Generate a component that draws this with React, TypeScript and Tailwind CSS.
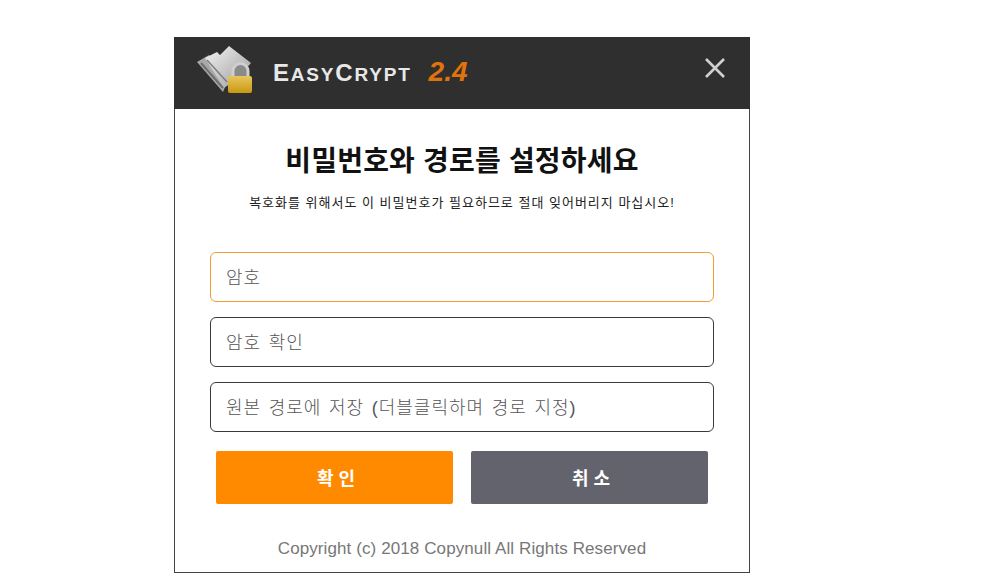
import { JSX } from "react";

const fields = [
    { label: "암호", border: "border-[#f39c2f]" },
    { label: "암호 확인", border: "border-[#3a3a3a]" },
    { label: "원본 경로에 저장 (더블클릭하며 경로 지정)", border: "border-[#3a3a3a]" },
];

function Logo(): JSX.Element {
    return (
        <svg width="58" height="50" viewBox="0 0 58 50" className="mb-[8px]">
            <defs>
                <linearGradient id="fold" x1="0" y1="0" x2="1" y2="1">
                    <stop offset="0" stopColor="#f4f4f4" />
                    <stop offset="1" stopColor="#9a9a9a" />
                </linearGradient>
                <linearGradient id="lock" x1="0" y1="0" x2="0" y2="1">
                    <stop offset="0" stopColor="#e8c65c" />
                    <stop offset="1" stopColor="#c9980f" />
                </linearGradient>
            </defs>
            <path d="M1 18 L13 11 L33 33 L27 48 Z" fill="#a8a8a8" />
            <path d="M9 14 L21 8 L24 11 L33 2 L55 19 L42 34 L28 44 Z" fill="url(#fold)" />
            <path d="M5 19 L27 44" stroke="#6f6f6f" strokeWidth="2" />
            <path d="M11 16 L31 38" stroke="#7d7d7d" strokeWidth="1.5" />
            <path d="M37 33 V27 a7.5 7.5 0 0 1 15 0 V33" fill="#8a8a8a" stroke="#cfcfcf" strokeWidth="3" />
            <rect x="32" y="32" width="24" height="17" rx="2" fill="url(#lock)" />
        </svg>
    );
}

export default function App(): JSX.Element {
    return (
        <div className="w-[989px] h-[581px] bg-white pt-[37px] pl-[174px] overflow-hidden font-['Liberation_Sans','Noto_Sans_CJK_KR',sans-serif]">
            <div className="w-[576px] h-[536px] border-x border-b border-[#444] flex flex-col">
                <header className="h-[72px] -mx-px bg-[#2f2f2f] flex items-center pl-[22px] pr-[24px]">
                    <Logo />
                    <div className="ml-[19px] mb-[2px] flex items-baseline text-[#e8e8e8] font-bold tracking-[1.8px] font-['Liberation_Sans',sans-serif]">
                        <span className="text-[24px]">E</span>
                        <span className="text-[19px]">ASY</span>
                        <span className="text-[24px]">C</span>
                        <span className="text-[19px]">RYPT</span>
                        <span className="ml-[17px] text-[28px] italic text-[#e0740b] tracking-normal">2.4</span>
                    </div>
                    <svg className="ml-auto mb-[10px]" width="22" height="22" viewBox="0 0 22 22">
                        <path d="M2 2 L20 20 M20 2 L2 20" stroke="#d0d0d0" strokeWidth="2.6" />
                    </svg>
                </header>
                <main className="flex flex-col flex-1 items-center">
                    <h1 className="mt-[35px] text-[28px] leading-[36px] font-bold text-[#111] tracking-[0.2px]">비밀번호와 경로를 설정하세요</h1>
                    <p className="mt-[15px] text-[13px] leading-[16px] text-[#222] tracking-[1px]">복호화를 위해서도 이 비밀번호가 필요하므로 절대 잊어버리지 마십시오!</p>
                    <div className="mt-[41px] w-[504px] flex flex-col gap-[15px]">
                        {fields.map((field) => (
                            <input
                                key={field.label}
                                placeholder={field.label}
                                className={`h-[50px] w-full rounded-[6px] border bg-white px-[15px] pt-[2px] text-[18px] font-light tracking-[1px] [word-spacing:1.6px] placeholder:text-[#555] ${field.border}`}
                            />
                        ))}
                    </div>
                    <div className="mt-[19px] w-[492px] flex justify-between">
                        <button className="w-[237px] h-[53px] pt-[3px] pl-[3px] rounded-[2px] bg-[#ff8a00] text-white text-[18px] font-bold">확 인</button>
                        <button className="w-[237px] h-[53px] pt-[3px] pl-[3px] rounded-[2px] bg-[#63636d] text-white text-[18px] font-bold">취 소</button>
                    </div>
                    <footer className="mt-[35px] text-[17px] leading-[20px] text-[#777] tracking-[0.1px]">Copyright (c) 2018 Copynull All Rights Reserved</footer>
                </main>
            </div>
        </div>
    );
}
